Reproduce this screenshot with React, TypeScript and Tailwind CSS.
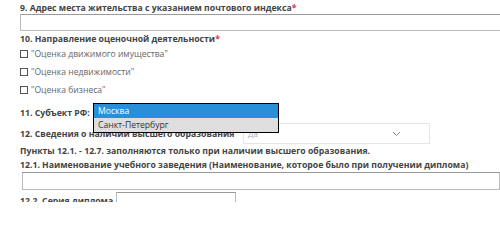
import React from "react";

const Star = () => <span className="text-[#e8304a]">*</span>;

function Check({ label }: { label: string }) {
  return (
    <div className="flex items-center h-[18px]">
      <span className="w-[8px] h-[8px] border border-[#555] bg-white shrink-0" />
      <span className="ml-[3px] text-[8.6px] text-[#666]">"{label}"</span>
    </div>
  );
}

export default function App() {
  return (
    <div className="w-[500px] h-[202px] overflow-hidden bg-white pl-5 font-['Open_Sans',sans-serif] text-[#444]">
      <div className="mt-[3px] h-[11px] leading-[11px] text-[8.7px] font-bold whitespace-nowrap">
        9. Адрес места жительства с указанием почтового индекса<Star />
      </div>
      <div className="h-[17px] w-[495px] border border-[#bbb] border-t-[#999]" />

      <div className="mt-[3px] h-[11px] leading-[11px] text-[8.7px] font-bold whitespace-nowrap">
        10. Направление оценочной деятельности<Star />
      </div>
      <div className="flex flex-col">
        <Check label="Оценка движимого имущества" />
        <Check label="Оценка недвижимости" />
        <Check label="Оценка бизнеса" />
      </div>

      <div className="relative mt-[7px] flex items-center h-[14px]">
        <span className="text-[8.7px] font-bold leading-[14px]">11. Субъект РФ:</span>
        <div className="absolute left-[73px] top-[-3px] w-[186px] border border-black bg-white text-[8.6px] leading-[14px] z-10">
          <div className="bg-[#2a8fd9] text-white pl-1 h-[14px]">Москва</div>
          <div className="bg-[#dedede] text-[#333] pl-1 h-[14px]">Санкт-Петербург</div>
        </div>
      </div>

      <div className="mt-[3px] flex items-center h-[21px]">
        <span className="text-[8.7px] font-bold leading-[14px] w-[223px] whitespace-nowrap">
          12. Сведения о наличии высшего образования
        </span>
        <div className="w-[187px] h-[21px] border border-[#e6e6e6] flex items-center pl-1 pr-7 justify-between">
          <span className="text-[8px] text-[#aaa]">Да</span>
          <svg width="9" height="6" viewBox="0 0 9 6" className="mt-[1px]">
            <path d="M1 1l3.5 3.5L8 1" fill="none" stroke="#888" strokeWidth="1" />
          </svg>
        </div>
      </div>

      <div className="h-[14px] leading-[14px] text-[8.7px] font-bold whitespace-nowrap">
        Пункты 12.1. - 12.7. заполняются только при наличии высшего образования.
      </div>
      <div className="h-[14px] leading-[14px] text-[8.7px] font-bold whitespace-nowrap">
        12.1. Наименование учебного заведения (Наименование, которое было при получении диплома)
      </div>
      <div className="ml-[2px] h-[18px] w-[478px] border border-[#bbb] border-t-[#999]" />

      <div className="mt-[2px] flex items-start">
        <span className="text-[8.7px] font-bold leading-[14px] mt-[2px] w-[96px] whitespace-nowrap">12.2. Серия диплома</span>
        <div className="h-[18px] w-[120px] border border-[#bbb] border-t-[#999]" />
      </div>
    </div>
  );
}
